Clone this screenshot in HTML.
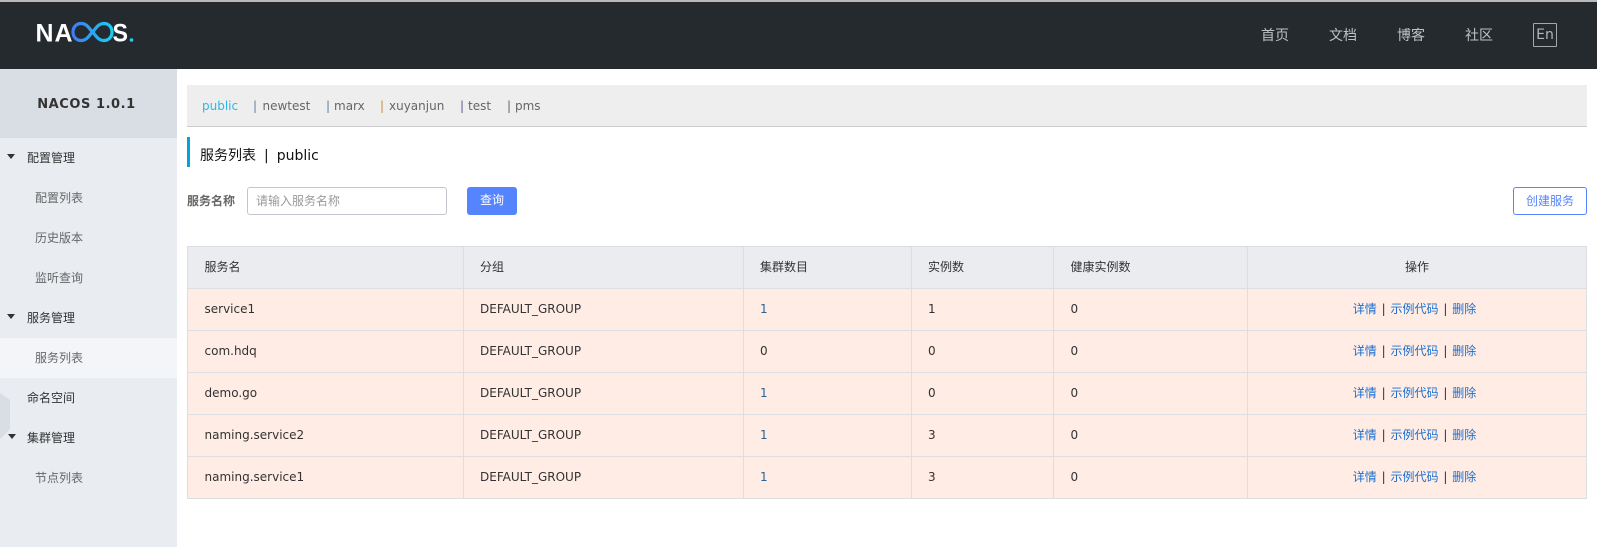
<!DOCTYPE html>
<html lang="zh">
<head>
<meta charset="utf-8">
<title>Nacos</title>
<style>
*{box-sizing:border-box;margin:0;padding:0}
html,body{width:1597px;height:547px;overflow:hidden;background:#fff}
body{position:relative;font-family:"DejaVu Sans","Noto Sans CJK SC",sans-serif;font-size:12px;color:#333}
.abs{position:absolute;white-space:nowrap}
#top{position:absolute;left:0;top:0;width:1597px;height:69px;background:#252a2f;border-top:2px solid #b9b9b9}
.nav{position:absolute;top:25px;color:#bfc2c4;font-size:14px;line-height:20px;font-family:"Noto Sans CJK SC",sans-serif}
#en{position:absolute;left:1533px;top:23px;width:24px;height:24px;border:1px solid #a5a8aa;border-radius:1px;color:#b4b7b9;font-size:14px;line-height:22px;text-align:center}
#side{position:absolute;left:0;top:69px;width:177px;height:478px;background:#e9ecf1}
#sh{position:absolute;left:0;top:0;width:173px;height:69px;color:#333;font-weight:bold;font-size:13px;line-height:71px;text-align:center;letter-spacing:.55px}
#shbg{position:absolute;left:0;top:0;width:177px;height:69px;background:#d9dde4}
.m{position:absolute;font-family:"Noto Sans CJK SC",sans-serif;font-size:12px;line-height:20px;white-space:nowrap}
.m1{left:27px;color:#333}
.m2{left:35px;color:#666}
.tri{position:absolute;left:7px;width:0;height:0;border-left:4.5px solid transparent;border-right:4.5px solid transparent;border-top:5px solid #333}
#tabs{position:absolute;left:187px;top:85px;width:1400px;height:42px;background:#eee;border-bottom:1px solid #ccc;line-height:42px;color:#666;font-size:12px}
#tabs span{position:absolute;top:0;white-space:nowrap}
#tabs i{position:absolute;top:0;font-style:normal;color:#666}
#bar{position:absolute;left:187px;top:137px;width:3px;height:30px;background:#09a2d6}
#title{position:absolute;left:200px;top:146px;color:#111;font-size:14px;line-height:20px;white-space:nowrap;font-family:"DejaVu Sans","Noto Sans CJK SC",sans-serif}
#title b{font-weight:normal;margin:0 8px}
#lab{position:absolute;left:187px;top:191px;font-weight:bold;font-size:12px;line-height:20px;color:#666;font-family:"Noto Sans CJK SC",sans-serif}
#inp{position:absolute;left:247px;top:187px;width:200px;height:28px;border:1px solid #c4c6cf;border-radius:3px;padding-left:8px;color:#999;font-size:12px;line-height:25px;background:#fff;font-family:"Noto Sans CJK SC",sans-serif}
.btn{position:absolute;top:187px;height:28px;border-radius:3px;font-size:12px;line-height:26px;text-align:center;font-family:"Noto Sans CJK SC",sans-serif}
#q{left:467px;width:50px;background:#5584ff;color:#fff}
#c{left:1513px;width:74px;border:1px solid #5584ff;color:#5584ff;background:#fff}
#tb{position:absolute;left:187px;top:246px;width:1400px;height:253px;border-collapse:collapse;table-layout:fixed;font-size:12px;color:#333}
#tb td,#tb th{border:1px solid #dcdee3;padding:0 0 2px 16.500px;font-weight:normal;text-align:left;height:42px;white-space:nowrap;line-height:20px}
#tb th{background:#ebecf0;font-family:"Noto Sans CJK SC",sans-serif}
#tb tr.r td{background:#ffece4}
#tb th.op{text-align:center;padding:0 0 2px}
#tb td.op{text-align:center;padding:0 5px 2px 0}
#tb td.op a{color:#1a6fd0;text-decoration:none;font-family:"Noto Sans CJK SC",sans-serif}
#tb td.op s{text-decoration:none;margin:0 1px}
#tb td.l{color:#2a6496}
</style>
</head>
<body>
<div id="top"></div>
<svg class="abs" style="left:30px;top:16px" width="110" height="32" viewBox="0 0 110 32">
<defs><linearGradient id="g" x1="0" x2="1" y1="0" y2="0"><stop offset="0" stop-color="#3f7df0"/><stop offset="1" stop-color="#19cdf5"/></linearGradient></defs>
<text x="5.500" y="25.500" font-family="Liberation Sans" font-weight="bold" font-size="25" fill="#fff" textLength="18" lengthAdjust="spacingAndGlyphs">N</text>
<text x="24.500" y="25.500" font-family="Liberation Sans" font-weight="bold" font-size="25" fill="#fff" textLength="18" lengthAdjust="spacingAndGlyphs">A</text>
<path d="M57 9.800C55 8 53 7.500 51 7.500C46.500 7.500 43 11 43 16C43 21 46.500 24.500 51 24.500C57.500 24.500 60 18 62.500 16C65 14 67.500 7.500 74 7.500C78.500 7.500 82 11 82 16C82 21 78.500 24.500 74 24.500C67.500 24.500 65 18 62.500 16C60 14 57.500 7.500 51 7.500" fill="none" stroke="url(#g)" stroke-width="3.200"/>
<text x="82.500" y="25.500" font-family="Liberation Sans" font-weight="bold" font-size="25" fill="#fff" textLength="15.500" lengthAdjust="spacingAndGlyphs">S</text>
<circle cx="101.500" cy="24" r="1.800" fill="#1fd0f0"/>
</svg>
<div class="nav" style="left:1261px">首页</div>
<div class="nav" style="left:1329px">文档</div>
<div class="nav" style="left:1397px">博客</div>
<div class="nav" style="left:1465px">社区</div>
<div id="en">En</div>

<div id="side">
<div id="shbg"></div>
<div id="sh">NACOS 1.0.1</div>
<div style="position:absolute;left:0;top:269px;width:177px;height:40px;background:#f4f5f8"></div>
<svg class="abs" style="left:0;top:324px" width="11" height="48"><path d="M0 0L10 7V36L0 46Z" fill="#d9dde4"/></svg>
<div class="tri" style="top:85px"></div>
<div class="m m1" style="top:79px">配置管理</div>
<div class="m m2" style="top:119px">配置列表</div>
<div class="m m2" style="top:159px">历史版本</div>
<div class="m m2" style="top:199px">监听查询</div>
<div class="tri" style="top:245px"></div>
<div class="m m1" style="top:239px">服务管理</div>
<div class="m m2" style="top:279px">服务列表</div>
<div class="m m1" style="top:319px">命名空间</div>
<div class="tri" style="top:365px;left:8px;border-left-width:4px;border-right-width:4px"></div>
<div class="m m1" style="top:359px">集群管理</div>
<div class="m m2" style="top:399px">节点列表</div>
</div>

<div id="tabs">
<span style="left:15px;color:#2bb7e6">public</span>
<i style="left:66px;color:#5a7fa8">|</i><span style="left:75.500px">newtest</span>
<i style="left:139px;color:#5a7fa8">|</i><span style="left:147px">marx</span>
<i style="left:193px;color:#c98a3d">|</i><span style="left:202px">xuyanjun</span>
<i style="left:273px;color:#5a5a90">|</i><span style="left:281px">test</span>
<i style="left:320px">|</i><span style="left:328px">pms</span>
</div>
<div id="bar"></div>
<div id="title">服务列表<b>|</b>public</div>
<div id="lab">服务名称</div>
<div id="inp">请输入服务名称</div>
<div class="btn" id="q">查询</div>
<div class="btn" id="c">创建服务</div>

<table id="tb">
<colgroup><col style="width:275.500px"><col style="width:280px"><col style="width:168px"><col style="width:142.500px"><col style="width:194px"><col></colgroup>
<tr><th>服务名</th><th>分组</th><th>集群数目</th><th>实例数</th><th>健康实例数</th><th class="op">操作</th></tr>
<tr class="r"><td>service1</td><td>DEFAULT_GROUP</td><td class="l">1</td><td>1</td><td>0</td><td class="op"><a>详情</a> <s>|</s> <a>示例代码</a> <s>|</s> <a>删除</a></td></tr>
<tr class="r"><td>com.hdq</td><td>DEFAULT_GROUP</td><td>0</td><td>0</td><td>0</td><td class="op"><a>详情</a> <s>|</s> <a>示例代码</a> <s>|</s> <a>删除</a></td></tr>
<tr class="r"><td>demo.go</td><td>DEFAULT_GROUP</td><td class="l">1</td><td>0</td><td>0</td><td class="op"><a>详情</a> <s>|</s> <a>示例代码</a> <s>|</s> <a>删除</a></td></tr>
<tr class="r"><td>naming.service2</td><td>DEFAULT_GROUP</td><td class="l">1</td><td>3</td><td>0</td><td class="op"><a>详情</a> <s>|</s> <a>示例代码</a> <s>|</s> <a>删除</a></td></tr>
<tr class="r"><td>naming.service1</td><td>DEFAULT_GROUP</td><td class="l">1</td><td>3</td><td>0</td><td class="op"><a>详情</a> <s>|</s> <a>示例代码</a> <s>|</s> <a>删除</a></td></tr>
</table>
</body>
</html>
